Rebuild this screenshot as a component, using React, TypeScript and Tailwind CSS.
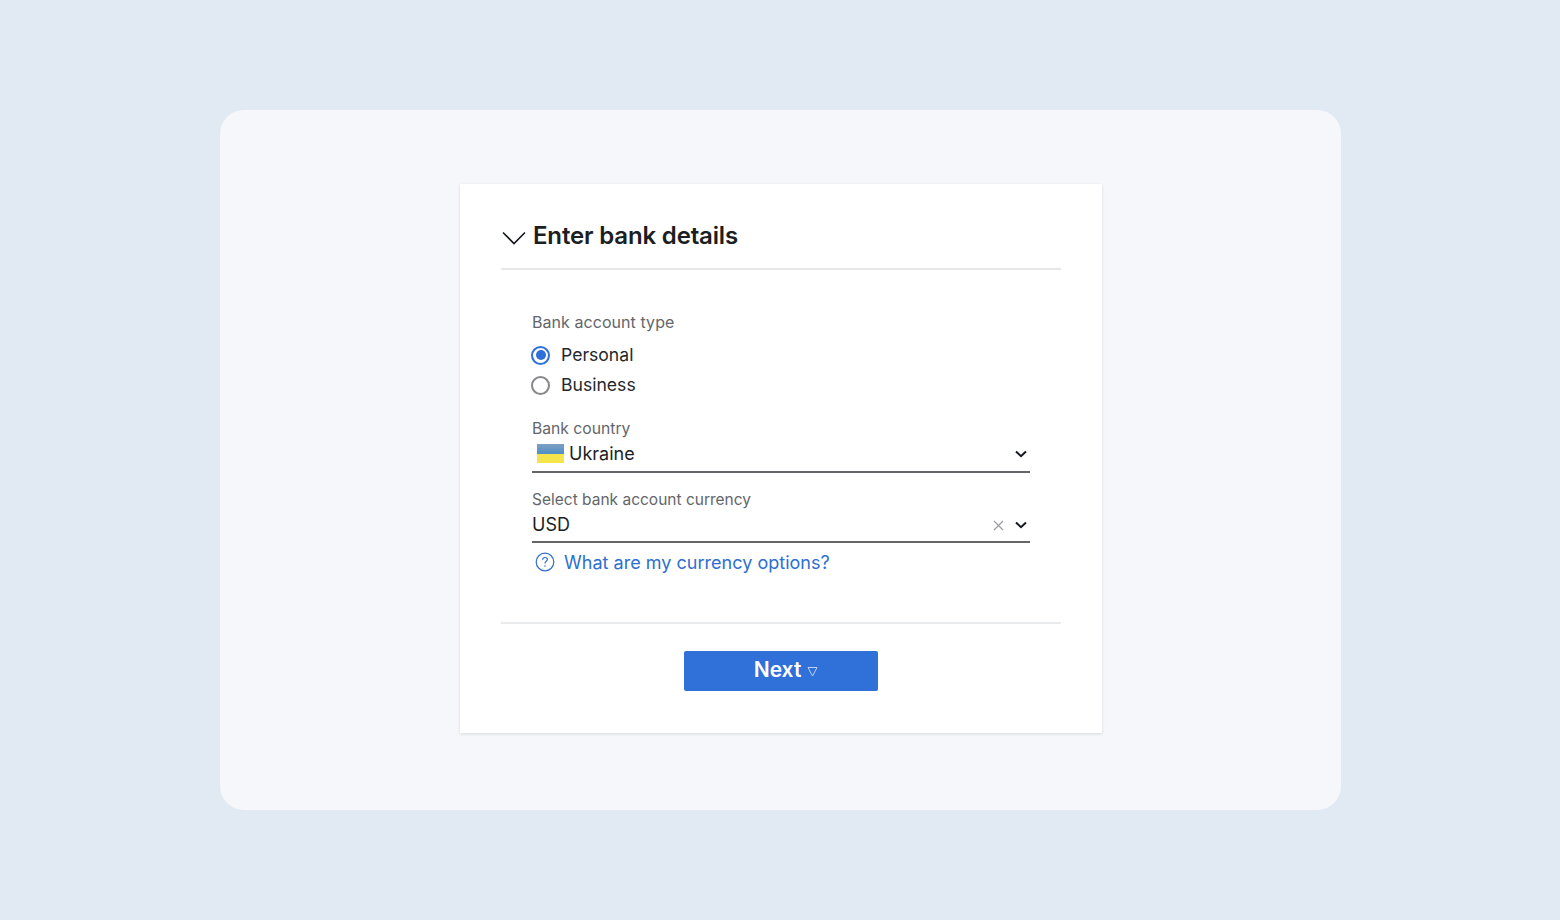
import React from "react";

function Chevron() {
  return (
    <svg width="12" height="8" viewBox="0 0 12 8" fill="none" className="block">
      <path d="M1 1.5 L6 6.2 L11 1.5" stroke="#14181d" strokeWidth="2" />
    </svg>
  );
}

export default function App() {
  return (
    <div className="w-[1560px] h-[920px] bg-[#e1e9f3] pt-[110px] pl-[220px] overflow-hidden font-['Inter',sans-serif]">
      <div className="w-[1121px] h-[700px] rounded-[24px] bg-[#f5f7fb] pt-[74px] pl-[240px]">
        <div className="w-[642px] h-[549px] bg-white shadow-[0_1px_3px_rgba(0,0,0,0.12)] px-[41px]">
          <div className="h-[86px] border-b-2 border-[#e6e7e9] flex items-center pt-[18px]">
            <svg width="24" height="14" viewBox="0 0 24 14" fill="none" className="mt-[5px] ml-[1px]">
              <path d="M1 1.5 L12 12.5 L23 1.5" stroke="#14181d" strokeWidth="1.6" />
            </svg>
            <h1 className="ml-[7px] text-[24px] leading-[30px] font-semibold text-[#1b1e22] mt-[1px] tracking-[-0.16px]">Enter bank details</h1>
          </div>

          <div className="px-[31px] pt-[42px] h-[354px] border-b-2 border-[#e9eaec]">
            <div className="text-[16px] leading-[20px] tracking-[0.06px] text-[#63666a]">Bank account type</div>
            <div className="mt-[11px] flex items-center h-[24px]">
              <span className="w-[19px] h-[19px] -ml-[1px] rounded-full border-2 border-[#2e6fd8] flex items-center justify-center">
                <span className="w-[10px] h-[10px] rounded-full bg-[#2e6fd8]" />
              </span>
              <span className="ml-[11px] text-[17.6px] text-[#24282c]">Personal</span>
            </div>
            <div className="mt-[6px] flex items-center h-[24px]">
              <span className="w-[19px] h-[19px] -ml-[1px] rounded-full border-2 border-[#85878a]" />
              <span className="ml-[11px] text-[17.6px] text-[#24282c]">Business</span>
            </div>

            <div className="mt-[22px] text-[15.7px] leading-[20px] text-[#63666a]">Bank country</div>
            <div className="h-[34px] border-b-2 border-[#636568] flex items-center pl-[5px] pr-[3px] pb-[3px]">
              <span className="w-[27px] h-[19px] flex flex-col">
                <span className="h-[10px] bg-gradient-to-b from-[#7d9fc0] to-[#4f8fc8]" />
                <span className="h-[9px] bg-[#f6e44c]" />
              </span>
              <span className="ml-[5px] text-[18px] text-[#1b1e22]">Ukraine</span>
              <span className="ml-auto"><Chevron /></span>
            </div>

            <div className="mt-[17px] text-[15.5px] leading-[20px] text-[#63666a]">Select bank account currency</div>
            <div className="h-[33px] border-b-2 border-[#636568] flex items-center pr-[3px] pb-[2px]">
              <span className="text-[18px] text-[#1b1e22]">USD</span>
              <svg width="11" height="11" viewBox="0 0 11 11" fill="none" className="ml-auto mt-[2px] translate-x-[1px]">
                <path d="M1 1 L10 10 M10 1 L1 10" stroke="#9b9da0" strokeWidth="1.2" />
              </svg>
              <span className="ml-[12px] mt-[1px]"><Chevron /></span>
            </div>

            <div className="mt-[8px] flex items-center pl-[3px]">
              <svg width="20" height="20" viewBox="0 0 20 20" fill="none" className="-mt-[3px]">
                <circle cx="10" cy="10" r="8.8" stroke="#2e6fd0" strokeWidth="1.2" />
                <path d="M7.6 7.8 C7.6 6.3 8.7 5.5 10 5.5 C11.4 5.5 12.4 6.4 12.4 7.6 C12.4 9.2 10 9.4 10 11.4" stroke="#2e6fd0" strokeWidth="1.2" />
                <circle cx="10" cy="14" r="0.8" fill="#2e6fd0" />
              </svg>
              <span className="ml-[9px] text-[18px] leading-[24px] text-[#2e6fd0] tracking-[0.02px]">What are my currency options?</span>
            </div>
          </div>

          <div className="flex justify-center pt-[27px]">
            <button className="w-[194px] h-[40px] bg-[#2f70d9] rounded-[2px] flex items-center justify-center text-white">
              <span className="text-[21px] leading-[28px] font-semibold ml-[10px] -mt-[3px]">Next</span>
              <svg width="11" height="11" viewBox="0 0 11 11" fill="none" className="ml-[6px]">
                <path d="M1 1.5 H10 L5.5 10 Z" stroke="#bcd3f5" strokeWidth="1" />
              </svg>
            </button>
          </div>
        </div>
      </div>
    </div>
  );
}
